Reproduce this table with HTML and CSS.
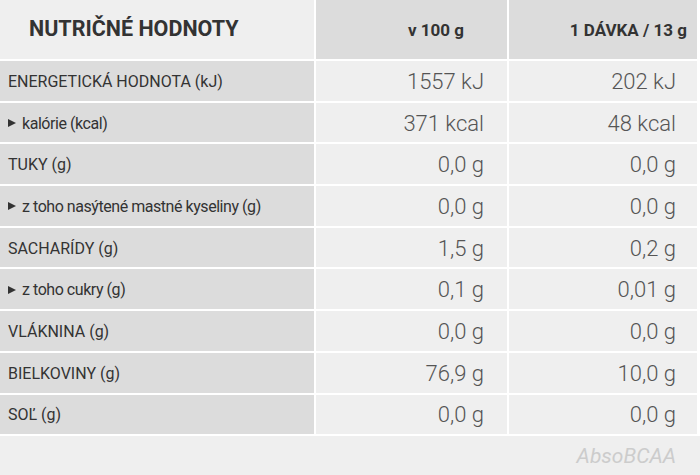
FILE: index.html
```html
<!DOCTYPE html>
<html lang="sk">
<head>
<meta charset="utf-8">
<link rel="stylesheet" href="styles.css">
</head>
<body>
<div class="table">
  <div class="cell head-title">NUTRIČNÉ HODNOTY</div>
  <div class="cell head-col head-c2">v 100 g</div>
  <div class="cell head-col head-c3">1 DÁVKA / 13 g</div>

  <div class="cell label">ENERGETICKÁ HODNOTA (kJ)</div>
  <div class="cell val c2">1557 kJ</div>
  <div class="cell val c3">202 kJ</div>

  <div class="cell label sub"><span class="tri"></span>kalórie (kcal)</div>
  <div class="cell val c2">371 kcal</div>
  <div class="cell val c3">48 kcal</div>

  <div class="cell label">TUKY (g)</div>
  <div class="cell val c2">0,0 g</div>
  <div class="cell val c3">0,0 g</div>

  <div class="cell label sub"><span class="tri"></span>z toho nasýtené mastné kyseliny (g)</div>
  <div class="cell val c2">0,0 g</div>
  <div class="cell val c3">0,0 g</div>

  <div class="cell label">SACHARÍDY (g)</div>
  <div class="cell val c2">1,5 g</div>
  <div class="cell val c3">0,2 g</div>

  <div class="cell label sub"><span class="tri"></span>z toho cukry (g)</div>
  <div class="cell val c2">0,1 g</div>
  <div class="cell val c3">0,01 g</div>

  <div class="cell label">VLÁKNINA (g)</div>
  <div class="cell val c2">0,0 g</div>
  <div class="cell val c3">0,0 g</div>

  <div class="cell label">BIELKOVINY (g)</div>
  <div class="cell val c2">76,9 g</div>
  <div class="cell val c3">10,0 g</div>

  <div class="cell label">SOĽ (g)</div>
  <div class="cell val c2">0,0 g</div>
  <div class="cell val c3">0,0 g</div>

  <div class="cell footer">AbsoBCAA</div>
</div>
</body>
</html>
```
FILE: styles.css
```css
html, body {
  margin: 0;
  padding: 0;
  background: #ffffff;
}
body {
  font-family: Roboto, "Liberation Sans", sans-serif;
  width: 700px;
  height: 475px;
  overflow: hidden;
}
.table {
  display: grid;
  grid-template-columns: 314px 191px 188px;
  grid-template-rows: 59px repeat(9, 39.7px) 40px;
  column-gap: 2px;
  row-gap: 2px;
  width: 700px;
  background: #ffffff;
}
.cell {
  display: flex;
  align-items: center;
  box-sizing: border-box;
  white-space: nowrap;
}
.head-title {
  background: #efefef;
  color: #333333;
  font-weight: 700;
  font-size: 21.5px;
  padding-left: 29px;
  padding-bottom: 3px;
}
.head-col {
  background: #dcdcdc;
  color: #333333;
  font-weight: 700;
  font-size: 17px;
  justify-content: flex-end;
}
.head-c2 { padding-right: 43px; }
.head-c3 { padding-right: 10px; }
.label {
  background: #dcdcdc;
  color: #333333;
  font-size: 16px;
  padding-left: 8px;
  padding-top: 1px;
}
.sub {
  letter-spacing: -0.45px;
}
.tri {
  display: inline-block;
  width: 0;
  height: 0;
  border-top: 4.5px solid transparent;
  border-bottom: 4.5px solid transparent;
  border-left: 8px solid #333333;
  margin-right: 6px;
}
.val {
  background: #efefef;
  color: #555555;
  font-size: 22px;
  font-weight: 300;
  justify-content: flex-end;
  padding-top: 1px;
}
.c2 { padding-right: 23px; }
.c3 { padding-right: 21px; }
.footer {
  grid-column: 1 / 4;
  background: #efefef;
  justify-content: flex-end;
  padding-right: 24px;
  color: #cccccc;
  font-style: italic;
  font-size: 21px;
  font-weight: 400;
  width: 700px;
}
```
